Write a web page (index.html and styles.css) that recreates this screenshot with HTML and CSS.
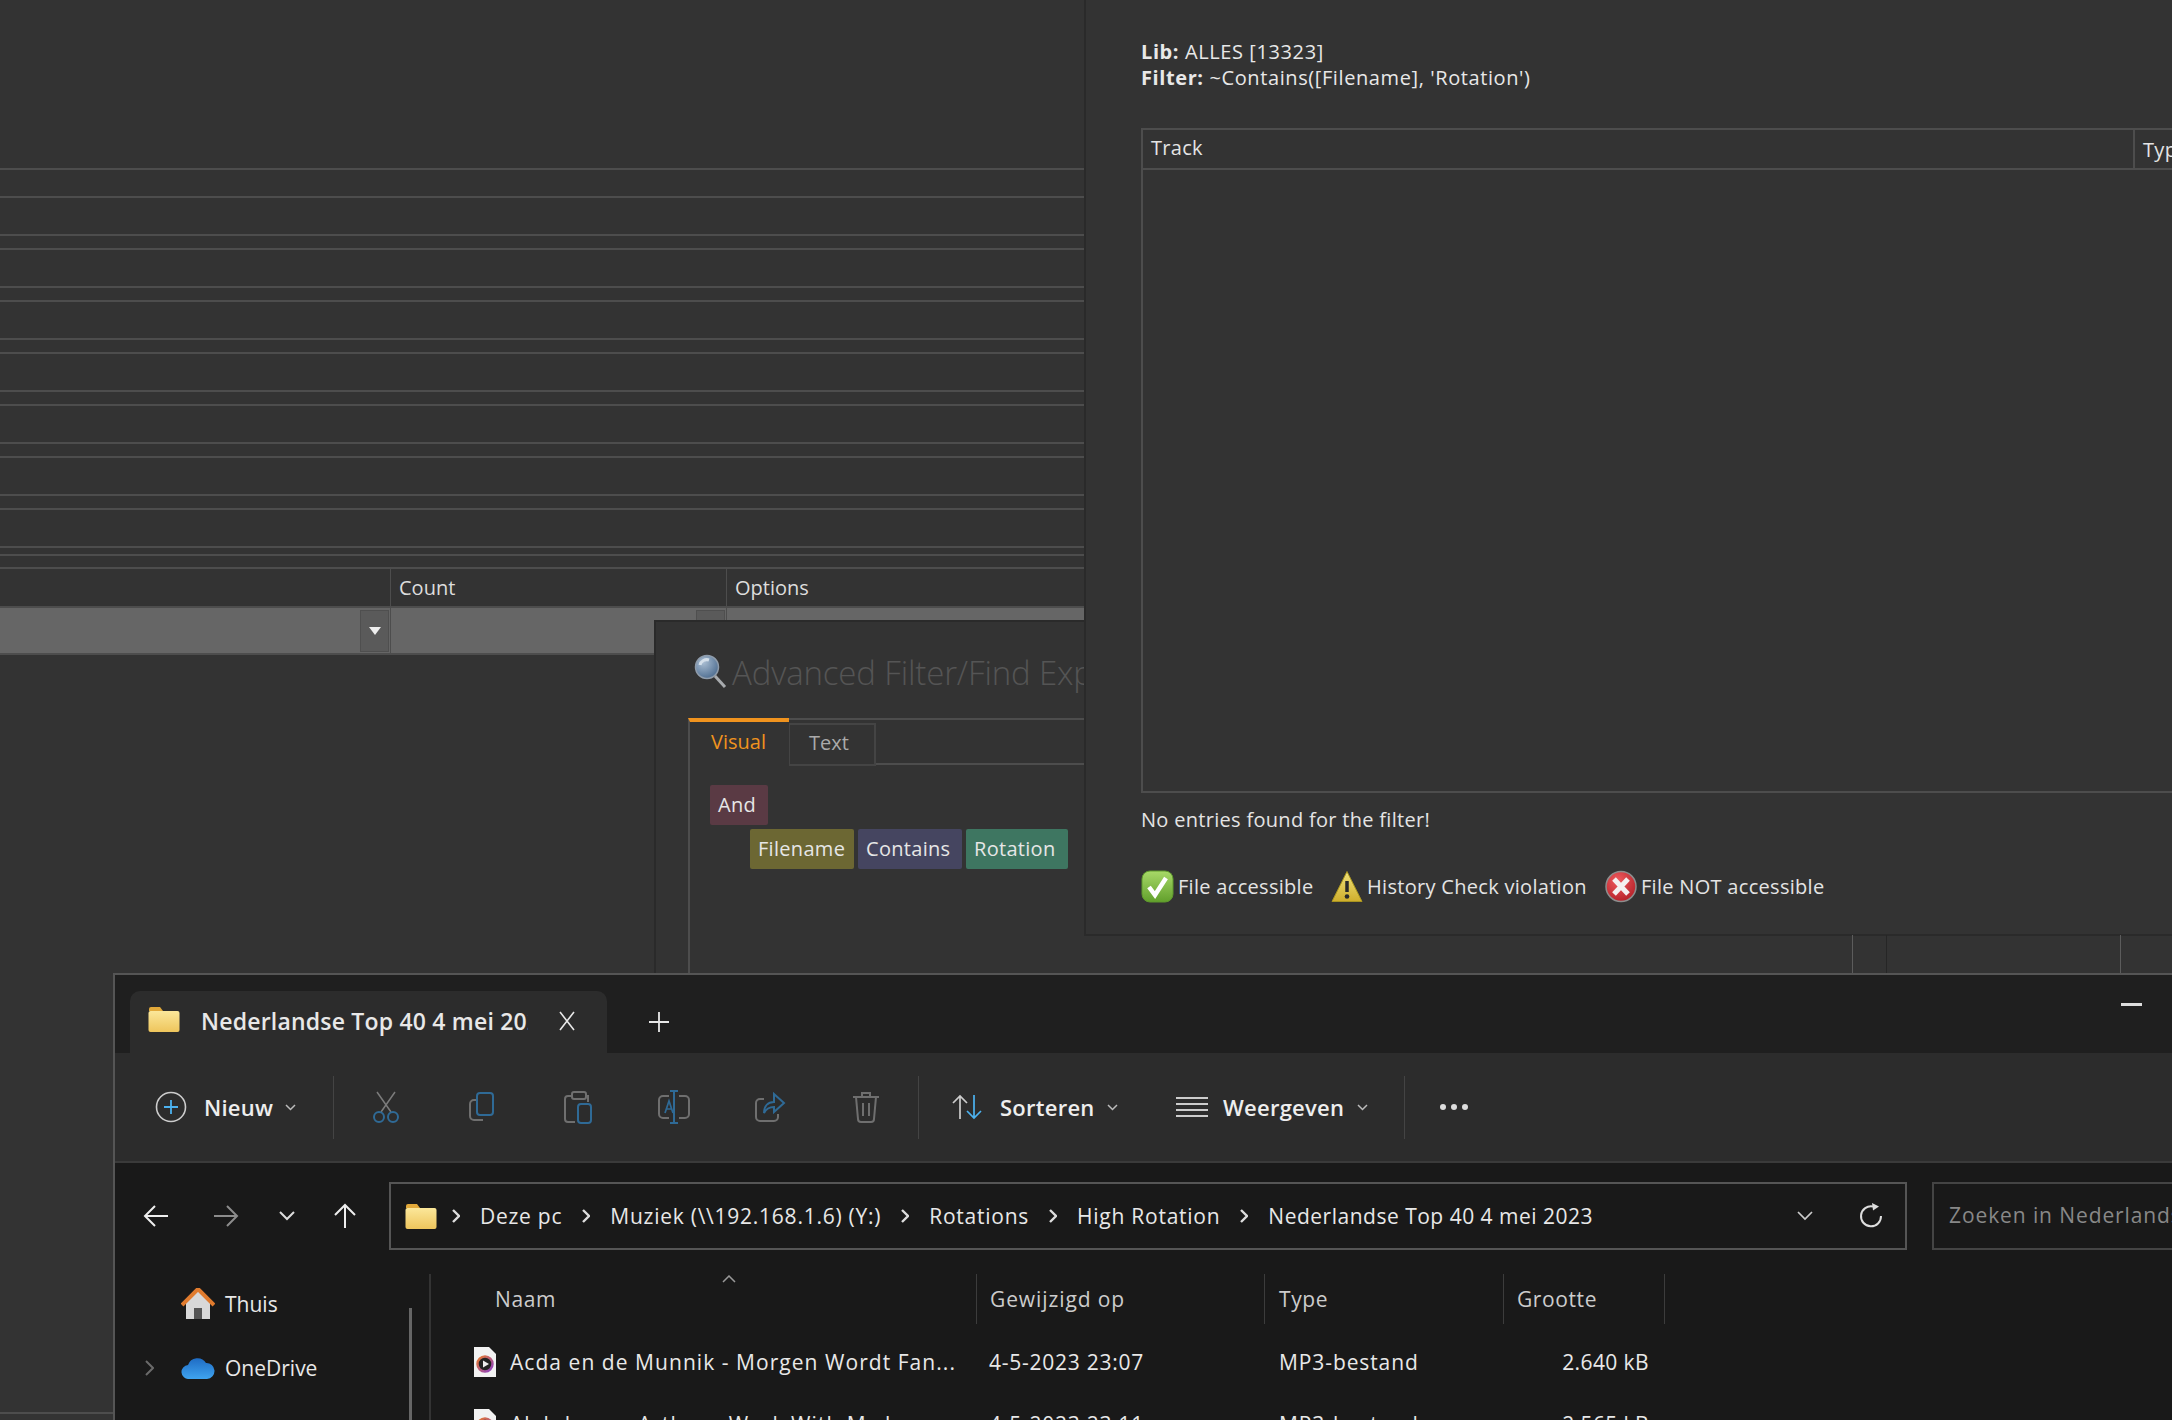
FILE: index.html
```html
<!DOCTYPE html>
<html lang="nl">
<head>
  <meta charset="UTF-8">
  <title>Library filter</title>
  <link rel="stylesheet" href="styles.css">
</head>
<body>
  <svg class="defs" width="0" height="0">
    <defs>
      <linearGradient id="gFolder" x1="0" y1="0" x2="0" y2="1"><stop offset="0" stop-color="#fbe79a"/><stop offset="1" stop-color="#eec55c"/></linearGradient>
      <linearGradient id="gOk" x1="0" y1="0" x2="0" y2="1"><stop offset="0" stop-color="#a8d968"/><stop offset="1" stop-color="#62a02c"/></linearGradient>
      <linearGradient id="gWarn" x1="0" y1="0" x2="0" y2="1"><stop offset="0" stop-color="#f0e27a"/><stop offset="1" stop-color="#cfae2c"/></linearGradient>
      <radialGradient id="gErr" cx="0.4" cy="0.3" r="0.8"><stop offset="0" stop-color="#ee5a5e"/><stop offset="1" stop-color="#b01c24"/></radialGradient>
      <radialGradient id="gLens" cx="0.35" cy="0.3" r="0.8"><stop offset="0" stop-color="#a9bdd2"/><stop offset="1" stop-color="#48688c"/></radialGradient>
      <linearGradient id="gCloud" x1="0" y1="0" x2="0" y2="1"><stop offset="0" stop-color="#1f6cc4"/><stop offset="1" stop-color="#3fa4f0"/></linearGradient>
      <linearGradient id="gRing" x1="0" y1="0" x2="1" y2="1"><stop offset="0" stop-color="#e8792a"/><stop offset="1" stop-color="#8a3fc8"/></linearGradient>
    </defs>
  </svg>
  <div class="desk">

    <!-- main window behind everything -->
    <div class="back-lines">
      <i style="top:168px"></i><i style="top:196px"></i><i style="top:234px"></i><i style="top:248px"></i>
      <i style="top:286px"></i><i style="top:300px"></i><i style="top:338px"></i><i style="top:352px"></i>
      <i style="top:390px"></i><i style="top:404px"></i><i style="top:442px"></i><i style="top:456px"></i>
      <i style="top:494px"></i><i style="top:508px"></i><i style="top:546px"></i><i style="top:554px"></i>
      <i style="top:1412px"></i>
    </div>
    <div class="grid">
      <div class="grid-head">
        <div class="col col-a"></div>
        <div class="col col-b">Count</div>
        <div class="col col-c">Options</div>
      </div>
      <div class="grid-row">
        <div class="cell col-a"><span class="drop"><svg width="14" height="10" viewBox="0 0 14 10"><path d="M1 1h12L7 9z" fill="#eee"/></svg></span></div>
        <div class="cell col-b"><span class="drop"></span></div>
        <div class="cell col-c"></div>
      </div>
    </div>

    <!-- filter expression dialog -->
    <div class="filter-dlg">
      <div class="filter-title">
        <svg width="34" height="36" viewBox="0 0 34 36"><circle cx="13" cy="13" r="11.500" fill="url(#gLens)" stroke="#8f9cab" stroke-width="1.500"/><path d="M6 11a7 7 0 0 1 9-5" stroke="#d4dfea" stroke-width="3" fill="none"/><path d="M21 22l10 11" stroke="#a8abae" stroke-width="3"/></svg>
        <span>Advanced Filter/Find Expression</span>
      </div>
      <div class="filter-tabs">
        <div class="tab tab-on">Visual</div>
        <div class="tab">Text</div>
      </div>
      <div class="filter-body">
        <div class="chips"><span class="chip chip-and">And</span></div>
        <div class="chips chips-sub">
          <span class="chip chip-field">Filename</span>
          <span class="chip chip-op">Contains</span>
          <span class="chip chip-val">Rotation</span>
        </div>
      </div>
    </div>

    <!-- results panel -->
    <div class="results">
      <div class="res-info">
        <div><b>Lib:</b> ALLES [13323]</div>
        <div><b>Filter:</b> ~Contains([Filename], 'Rotation')</div>
      </div>
      <div class="res-table">
        <div class="res-head">
          <div class="res-track">Track</div>
          <div class="res-type">Type</div>
        </div>
      </div>
      <div class="res-empty">No entries found for the filter!</div>
      <div class="legend">
        <svg width="33" height="33" viewBox="0 0 33 33"><rect x="1" y="1" width="31" height="31" rx="8" fill="url(#gOk)" stroke="#5f9a2c"/><path d="M8 17l6 8L25 8" stroke="#fff" stroke-width="4.500" fill="none"/></svg>
        <span class="legend-txt leg-a">File accessible</span>
        <svg width="32" height="33" viewBox="0 0 32 33"><path d="M16 1.500L31 31.500H1z" fill="url(#gWarn)" stroke="#a89420" stroke-linejoin="round"/><path d="M16 11v11" stroke="#2a2a2a" stroke-width="3.500"/><circle cx="16" cy="26.500" r="2.300" fill="#2a2a2a"/></svg>
        <span class="legend-txt leg-b">History Check violation</span>
        <svg width="32" height="33" viewBox="0 0 32 33"><circle cx="16" cy="16.500" r="15" fill="url(#gErr)" stroke="#8d8d8d" stroke-width="1.500"/><path d="M9 9l14 15M23 9L9 24" stroke="#f4f0f0" stroke-width="5"/></svg>
        <span class="legend-txt">File NOT accessible</span>
      </div>
    </div>
    <i class="stub stub-a"></i><i class="stub stub-b"></i><i class="stub stub-c"></i>

    <!-- explorer -->
    <div class="explorer">
      <div class="ex-tabbar">
        <div class="ex-tab">
          <svg class="folder" width="32" height="26" viewBox="0 0 32 26"><path d="M1 3a2 2 0 0 1 2-2h9l3 4H1z" fill="#e2a93a"/><rect x="0.500" y="5" width="31" height="21" rx="2" fill="url(#gFolder)"/></svg>
          <span class="ex-tab-name">Nederlandse Top 40 4 mei 2023</span>
          <svg width="16" height="20" viewBox="0 0 16 20"><path d="M1 1l14 18M15 1L1 19" stroke="#e8e8e8" stroke-width="1.600"/></svg>
        </div>
        <svg class="ex-new" width="22" height="22" viewBox="0 0 22 22"><path d="M11 1v20M1 11h20" stroke="#e8e8e8" stroke-width="1.800"/></svg>
        <div class="ex-min"></div>
      </div>

      <div class="ex-toolbar">
        <button class="tb tb-new">
          <svg width="32" height="32" viewBox="0 0 32 32"><circle cx="16" cy="16" r="14.500" fill="none" stroke="#ccc" stroke-width="1.600"/><path d="M16 9v14M9 16h14" stroke="#4cb2f0" stroke-width="1.800"/></svg>
          <span>Nieuw</span>
          <svg class="chev" width="11" height="7" viewBox="0 0 11 7"><path d="M1 1l4.500 4.500L10 1" stroke="#bbb" stroke-width="1.500" fill="none"/></svg>
        </button>
        <div class="tb-sep"></div>
        <div class="tb-dim">
          <svg width="28" height="32" viewBox="0 0 28 32"><path d="M5 1l14 20M23 1L9 21" stroke="#7b7b7b" stroke-width="1.500"/><circle cx="7" cy="26" r="5" fill="none" stroke="#2f6a96" stroke-width="2"/><circle cx="21" cy="26" r="5" fill="none" stroke="#2f6a96" stroke-width="2"/></svg>
          <svg width="28" height="32" viewBox="0 0 28 32"><path d="M8 9H6a4 4 0 0 0-4 4v12a4 4 0 0 0 4 4h9" stroke="#6f6f6f" stroke-width="2" fill="none"/><rect x="9" y="2" width="16" height="22" rx="3" fill="none" stroke="#2f6a96" stroke-width="2"/></svg>
          <svg width="30" height="34" viewBox="0 0 30 34"><path d="M10 6H5a3 3 0 0 0-3 3v20a3 3 0 0 0 3 3h7M22 6h3v6" stroke="#6f6f6f" stroke-width="2" fill="none"/><rect x="9" y="2" width="14" height="7" rx="2" fill="none" stroke="#6f6f6f" stroke-width="2"/><rect x="15" y="14" width="13" height="19" rx="3" fill="none" stroke="#2f6a96" stroke-width="2"/></svg>
          <svg width="34" height="36" viewBox="0 0 34 36"><path d="M12 7H6a4 4 0 0 0-4 4v14a4 4 0 0 0 4 4h6M22 7h6a4 4 0 0 1 4 4v14a4 4 0 0 1-4 4h-6" stroke="#6f6f6f" stroke-width="2" fill="none"/><path d="M17 3v30M13 2h8M13 34h8" stroke="#2f6a96" stroke-width="2"/><path d="M8 24l4-12 4 12M9.500 20h5" stroke="#2f6a96" stroke-width="1.700" fill="none"/></svg>
          <svg width="32" height="32" viewBox="0 0 32 32"><path d="M10 8H6a4 4 0 0 0-4 4v14a4 4 0 0 0 4 4h14a4 4 0 0 0 4-4v-3" stroke="#6f6f6f" stroke-width="2" fill="none"/><path d="M20 3l10 9-10 9v-5c-5 0-8 2-10 6 0-7 4-11 10-11z" stroke="#2f6a96" stroke-width="2" fill="none"/></svg>
          <svg width="28" height="32" viewBox="0 0 28 32"><path d="M1 6h26M10 6V2h8v4M4 6l2 22a3 3 0 0 0 3 3h10a3 3 0 0 0 3-3l2-22M11 12v13M17 12v13" stroke="#6f6f6f" stroke-width="2" fill="none"/></svg>
        </div>
        <div class="tb-sep"></div>
        <button class="tb tb-sort">
          <svg width="34" height="26" viewBox="0 0 34 26"><path d="M10 25V2M3 9l7-7 7 7" stroke="#ccc" stroke-width="1.700" fill="none"/><path d="M24 1v23M17 17l7 7 7-7" stroke="#4cb2f0" stroke-width="1.700" fill="none"/></svg>
          <span>Sorteren</span>
          <svg class="chev" width="11" height="7" viewBox="0 0 11 7"><path d="M1 1l4.500 4.500L10 1" stroke="#bbb" stroke-width="1.500" fill="none"/></svg>
        </button>
        <button class="tb tb-view">
          <svg width="32" height="22" viewBox="0 0 32 22"><path d="M0 2h32M0 8h32M0 14h32M0 20h32" stroke="#ccc" stroke-width="2"/></svg>
          <span>Weergeven</span>
          <svg class="chev" width="11" height="7" viewBox="0 0 11 7"><path d="M1 1l4.500 4.500L10 1" stroke="#bbb" stroke-width="1.500" fill="none"/></svg>
        </button>
        <div class="tb-sep"></div>
        <div class="tb-more"><i></i><i></i><i></i></div>
      </div>

      <div class="ex-nav">
        <div class="nav-btns">
          <svg width="26" height="24" viewBox="0 0 26 24"><path d="M25 12H2M12 2L2 12l10 10" stroke="#eee" stroke-width="2" fill="none"/></svg>
          <svg width="26" height="24" viewBox="0 0 26 24"><path d="M1 12h23M14 2l10 10-10 10" stroke="#8c8c8c" stroke-width="2" fill="none"/></svg>
          <svg width="16" height="10" viewBox="0 0 16 10"><path d="M1 1l7 7 7-7" stroke="#ddd" stroke-width="2" fill="none"/></svg>
          <svg width="24" height="26" viewBox="0 0 24 26"><path d="M12 25V2M2 12L12 2l10 10" stroke="#eee" stroke-width="2" fill="none"/></svg>
        </div>
        <div class="addr">
          <svg width="32" height="26" viewBox="0 0 32 26"><path d="M1 3a2 2 0 0 1 2-2h9l3 4H1z" fill="#e2a93a"/><rect x="0.500" y="5" width="31" height="21" rx="2" fill="url(#gFolder)"/></svg>
          <svg class="crumb-sep crumb-first" width="8" height="14" viewBox="0 0 8 14"><path d="M1 1l6 6-6 6" stroke="#ddd" stroke-width="2.400" fill="none"/></svg>
          <span>Deze pc</span>
          <svg class="crumb-sep" width="8" height="14" viewBox="0 0 8 14"><path d="M1 1l6 6-6 6" stroke="#ddd" stroke-width="2.400" fill="none"/></svg>
          <span>Muziek (\\192.168.1.6) (Y:)</span>
          <svg class="crumb-sep" width="8" height="14" viewBox="0 0 8 14"><path d="M1 1l6 6-6 6" stroke="#ddd" stroke-width="2.400" fill="none"/></svg>
          <span>Rotations</span>
          <svg class="crumb-sep" width="8" height="14" viewBox="0 0 8 14"><path d="M1 1l6 6-6 6" stroke="#ddd" stroke-width="2.400" fill="none"/></svg>
          <span>High Rotation</span>
          <svg class="crumb-sep" width="8" height="14" viewBox="0 0 8 14"><path d="M1 1l6 6-6 6" stroke="#ddd" stroke-width="2.400" fill="none"/></svg>
          <span class="crumb-last">Nederlandse Top 40 4 mei 2023</span>
          <svg class="addr-drop" width="16" height="10" viewBox="0 0 16 10"><path d="M1 1l7 7 7-7" stroke="#ccc" stroke-width="1.700" fill="none"/></svg>
          <svg class="addr-ref" width="24" height="26" viewBox="0 0 24 26"><path d="M14 3.500A10 10 0 1 0 22 13" stroke="#ddd" stroke-width="2" fill="none"/><path d="M13 0l7 3.500-6 4z" fill="#ddd"/></svg>
        </div>
        <div class="search">Zoeken in Nederlandse Top 40</div>
      </div>

      <div class="ex-main">
        <div class="ex-side">
          <div class="side-item side-home">
            <svg width="34" height="32" viewBox="0 0 34 32"><path d="M5 14v17h24V14L17 3z" fill="#d8d8d8"/><path d="M13 31V20h8v11z" fill="#555"/><path d="M1 17L17 1l16 16" stroke="#e07b2e" stroke-width="4" fill="none"/></svg>
            <span>Thuis</span>
          </div>
          <div class="side-item side-one">
            <svg class="side-exp" width="9" height="16" viewBox="0 0 9 16"><path d="M1 1l7 7-7 7" stroke="#6a6a6a" stroke-width="2" fill="none"/></svg>
            <svg width="34" height="22" viewBox="0 0 34 22"><path d="M8 22a7 7 0 0 1-1-14 10 10 0 0 1 18-2 8 8 0 0 1 1 16z" fill="url(#gCloud)"/></svg>
            <span>OneDrive</span>
          </div>
          <div class="side-scroll"></div>
        </div>
        <div class="ex-list">
          <svg class="sort-caret" width="14" height="8" viewBox="0 0 14 8"><path d="M1 7l6-6 6 6" stroke="#999" stroke-width="1.500" fill="none"/></svg>
          <div class="list-head">
            <div class="lh lh-name">Naam</div>
            <div class="lh lh-date">Gewijzigd op</div>
            <div class="lh lh-type">Type</div>
            <div class="lh lh-size">Grootte</div>
          </div>
          <div class="file-row">
            <div class="f-name">
              <svg width="24" height="32" viewBox="0 0 24 32"><path d="M1 1h15l7 7v23H1z" fill="#f2f2f2"/><circle cx="12" cy="18" r="7.500" fill="#222" stroke="url(#gRing)" stroke-width="2.500"/><path d="M10 14.500l6 3.500-6 3.500z" fill="#eee"/></svg>
              <span>Acda en de Munnik - Morgen Wordt Fan...</span>
            </div>
            <div class="f-date">4-5-2023 23:07</div>
            <div class="f-type">MP3-bestand</div>
            <div class="f-size">2.640 kB</div>
          </div>
          <div class="file-row">
            <div class="f-name">
              <svg width="24" height="32" viewBox="0 0 24 32"><path d="M1 1h15l7 7v23H1z" fill="#f2f2f2"/><circle cx="12" cy="18" r="7.500" fill="#222" stroke="url(#gRing)" stroke-width="2.500"/><path d="M10 14.500l6 3.500-6 3.500z" fill="#eee"/></svg>
              <span>Alabdama - Arthur - Work With My Lo...</span>
            </div>
            <div class="f-date">4-5-2023 23:11</div>
            <div class="f-type">MP3-bestand</div>
            <div class="f-size">2.565 kB</div>
          </div>
        </div>
      </div>
    </div>
  </div>
</body>
</html>
```

FILE: styles.css
```css
* { box-sizing: border-box; }
html, body { margin: 0; padding: 0; height: 100%; overflow: hidden; }
body { background: #333; color: #e4e4e4; font-family: "Open Sans", "Noto Sans", sans-serif; font-size: 20px; }
.defs { position: absolute; }
.desk { position: relative; width: 2172px; height: 1420px; overflow: hidden; background: #333; }

/* back window */
.back-lines i { position: absolute; left: 0; width: 1084px; height: 2px; background: #4d4d4d; }
.back-lines i:last-child { width: 113px; }
.grid { position: absolute; left: 0; top: 567px; width: 1084px; }
.grid-head { display: flex; height: 41px; border-top: 2px solid #4d4d4d; border-bottom: 2px solid #4d4d4d; }
.col { padding: 0 8px; display: flex; align-items: center; border-right: 1px solid #4d4d4d; color: #ddd; }
.col-a { width: 391px; }
.col-b { width: 336px; }
.col-c { flex: 1; border-right: 0; }
.grid-row { display: flex; height: 47px; background: #666; border-bottom: 2px solid #4d4d4d; }
.cell { display: flex; justify-content: flex-end; padding: 2px 1px 2px 0; border-right: 1px solid #4d4d4d; }
.cell.col-c { border-right: 0; }
.drop { display: flex; align-items: center; justify-content: center; width: 29px; height: 42px; background: #5a5a5a; border: 1px solid #4f4f4f; }

/* filter dialog */
.filter-dlg { position: absolute; left: 654px; top: 620px; width: 900px; height: 360px; background: #333; border: 1px solid #2a2a2a; border-width: 2px 0 0 2px; }
.filter-title { display: flex; align-items: center; gap: 4px; padding: 4px 0 0 38px; height: 96px; white-space: nowrap; color: #555; font-size: 33px; font-weight: 300; letter-spacing: -0.15px; }
.filter-tabs { display: flex; margin-left: 32px; height: 46px; border-top: 2px solid #4d4d4d; align-items: flex-start; position: relative; }
.tab { width: 87px; height: 43px; margin-top: 3px; padding: 4px 0 0 19px; border: 2px solid #444; border-left-width: 1px; color: #aaa; }
.tab-on { width: 101px; height: 47px; margin-top: -2px; padding: 6px 0 0 21px; border: 0; border-top: 4px solid #f0931e; border-left: 2px solid #4d4d4d; color: #f0931e; }
.filter-tabs::after { content: ""; flex: 1; align-self: flex-end; height: 2px; background: #4d4d4d; margin-bottom: -1px; }
.filter-body { margin-left: 32px; height: 300px; padding: 21px 0 0 20px; border-left: 2px solid #4d4d4d; }
.chips { display: flex; gap: 4px; margin-bottom: 4px; }
.chips-sub { margin-left: 40px; }
.chip { display: block; height: 40px; line-height: 40px; padding: 0 8px; border-radius: 2px; color: #e6e6e6; letter-spacing: 0.3px; }
.chip-and { width: 58px; background: #5a3a44; }
.chip-field { width: 104px; background: #6c6733; }
.chip-op { width: 104px; background: #454560; }
.chip-val { width: 102px; background: #3e7661; }

/* results panel */
.results { position: absolute; left: 1084px; top: 0; right: 0; height: 936px; background: #333; border-left: 2px solid #2a2a2a; border-bottom: 2px solid #2a2a2a; padding: 39px 0 0 55px; letter-spacing: 0.3px; }
.res-info { line-height: 26px; height: 89px; color: #e8e8e8; letter-spacing: 0.6px; }
.res-info b { font-weight: 700; }
.res-table { width: 1200px; height: 665px; border: 2px solid #4d4d4d; border-right: 0; }
.res-head { display: flex; height: 40px; border-bottom: 2px solid #4d4d4d; align-items: center; }
.res-track { width: 992px; height: 100%; line-height: 36px; padding-left: 8px; border-right: 2px solid #4d4d4d; }
.res-type { padding-left: 8px; }
.res-empty { margin-top: 13px; line-height: 27px; }
.legend { display: flex; align-items: center; margin-top: 36px; height: 34px; }
.legend-txt { margin-left: 4px; }
.leg-a { width: 153px; }
.leg-b { width: 238px; }
.stub { position: absolute; top: 935px; width: 1px; height: 39px; }
.stub-a { left: 1852px; background: #5c5c5c; }
.stub-b { left: 1886px; background: #262626; }
.stub-c { left: 2120px; background: #5c5c5c; }

/* explorer */
.explorer { position: absolute; left: 113px; top: 973px; width: 2100px; height: 460px; background: #191919; border-top: 2px solid #555; border-left: 2px solid #555; font-size: 21px; color: #e8e8e8; }
.ex-tabbar { position: relative; display: flex; align-items: flex-end; height: 78px; background: #1f1f1f; }
.ex-tab { display: flex; align-items: center; width: 477px; height: 62px; margin-left: 15px; padding: 0 0 2px 18px; background: #2c2c2c; border-radius: 10px 10px 0 0; }
.ex-tab .folder { flex: none; margin-bottom: 4px; }
.ex-tab-name { width: 327px; margin: 0 31px 0 21px; overflow: hidden; white-space: nowrap; font-weight: 600; font-size: 23px; letter-spacing: 0.2px; }
.ex-new { margin: 0 0 20px 41px; }
.ex-min { position: absolute; left: 2006px; top: 28px; width: 21px; height: 3px; background: #ddd; }
.ex-toolbar { display: flex; align-items: center; height: 110px; background: #2c2c2c; border-bottom: 2px solid #3a3a3a; padding-left: 40px; }
.tb { display: flex; align-items: center; flex: none; padding: 0; background: none; border: 0; color: #eee; font: 600 22px "Open Sans", sans-serif; letter-spacing: 0.25px; }
.tb-new { width: 178px; }
.tb-new span { margin: 0 12px 0 17px; }
.tb-sep { flex: none; width: 1px; height: 63px; background: #444; }
.tb-dim { display: grid; grid-template-columns: repeat(6, 96px); justify-items: center; align-items: center; flex: none; width: 584px; padding-left: 4px; }
.tb-sort { width: 257px; padding-left: 31px; }
.tb-sort span { margin: 0 12px 0 16px; }
.tb-view { width: 228px; }
.tb-view span { margin: 0 13px 0 15px; }
.tb-more { display: flex; gap: 5px; margin-left: 35px; }
.tb-more i { width: 6px; height: 6px; border-radius: 50%; background: #ddd; }
.ex-nav { display: flex; align-items: center; height: 111px; padding: 0 0 6px 28px; }
.nav-btns { display: flex; align-items: center; flex: none; width: 246px; }
.nav-btns svg:nth-child(2) { margin-left: 44px; }
.nav-btns svg:nth-child(3) { margin-left: 40px; }
.nav-btns svg:nth-child(4) { margin-left: 38px; }
.addr { display: flex; align-items: center; flex: none; width: 1518px; height: 68px; border: 2px solid #555; padding-left: 14px; white-space: nowrap; letter-spacing: 0.75px; }
.crumb-sep { margin: 0 20px 0 20px; }
.crumb-first { margin: 0 20px 0 15px; }
.crumb-last { letter-spacing: 0.5px; }
.addr-drop { margin-left: auto; }
.addr-ref { margin: 0 22px 0 46px; }
.search { flex: none; width: 500px; height: 68px; margin-left: 25px; padding-left: 15px; line-height: 62px; border: 2px solid #444; color: #888; white-space: nowrap; letter-spacing: 0.9px; }
.ex-main { display: flex; height: 170px; }
.ex-side { position: relative; width: 316px; flex: none; border-right: 2px solid #333; padding-top: 5px; }
.side-item { display: flex; align-items: center; gap: 10px; height: 50px; margin-left: 66px; position: relative; }
.side-one { margin-top: 14px; }
.side-exp { position: absolute; left: -36px; top: 17px; }
.side-scroll { position: absolute; left: 294px; top: 34px; bottom: 0; width: 3px; background: #666; }
.ex-list { position: relative; flex: 1; }
.sort-caret { position: absolute; left: 291px; top: 1px; }
.list-head { display: flex; height: 50px; margin-bottom: 7px; }
.lh { display: flex; align-items: center; height: 100%; border-right: 1px solid #3c3c3c; color: #ccc; letter-spacing: 0.6px; }
.lh-name { width: 546px; padding-left: 64px; }
.lh-date { width: 288px; padding-left: 13px; letter-spacing: 0.9px; }
.lh-type { width: 239px; padding-left: 14px; }
.lh-size { width: 161px; padding-left: 13px; }
.file-row { display: flex; align-items: center; height: 62px; white-space: nowrap; letter-spacing: 0.9px; }
.f-name { display: flex; align-items: center; gap: 13px; width: 546px; padding-left: 42px; letter-spacing: 1.05px; }
.f-date { width: 288px; padding-left: 12px; letter-spacing: 0.75px; }
.f-type { width: 200px; padding-left: 14px; }
.f-size { width: 170px; padding-right: 14px; text-align: right; margin-left: 28px; letter-spacing: 0.4px; }
```
